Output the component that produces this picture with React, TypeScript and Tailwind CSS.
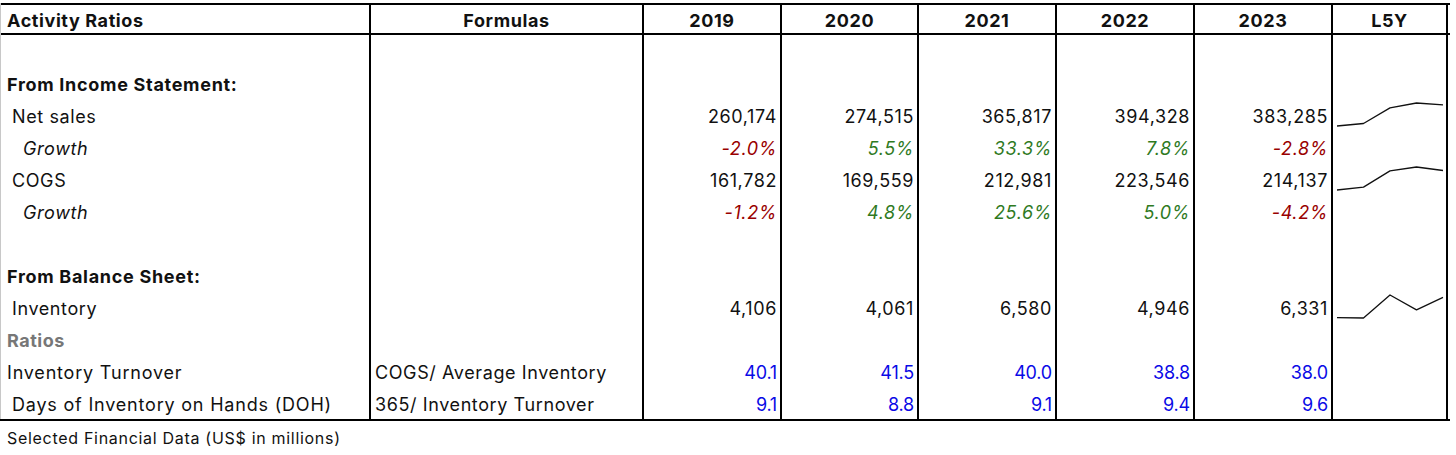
import React from 'react';

const W = ['w-[370px]', 'w-[273px]', 'w-[138px]', 'w-[137px]', 'w-[138px]', 'w-[138px]', 'w-[138px]', 'w-[115px]'];
const YEARS = ['2019', '2020', '2021', '2022', '2023'];

type Row = {
  label?: string;
  kind?: 'section' | 'item' | 'growth' | 'ratio' | 'gray' | 'sub';
  formula?: string;
  values?: string[];
  spark?: number[];
  blue?: boolean;
};

const rows: Row[] = [
  {},
  { label: 'From Income Statement:', kind: 'section' },
  { label: 'Net sales', kind: 'item', values: ['260,174', '274,515', '365,817', '394,328', '383,285'], spark: [260174, 274515, 365817, 394328, 383285] },
  { label: 'Growth', kind: 'growth', values: ['-2.0%', '5.5%', '33.3%', '7.8%', '-2.8%'] },
  { label: 'COGS', kind: 'item', values: ['161,782', '169,559', '212,981', '223,546', '214,137'], spark: [161782, 169559, 212981, 223546, 214137] },
  { label: 'Growth', kind: 'growth', values: ['-1.2%', '4.8%', '25.6%', '5.0%', '-4.2%'] },
  {},
  { label: 'From Balance Sheet:', kind: 'section' },
  { label: 'Inventory', kind: 'item', values: ['4,106', '4,061', '6,580', '4,946', '6,331'], spark: [4106, 4061, 6580, 4946, 6331] },
  { label: 'Ratios', kind: 'gray' },
  { label: 'Inventory Turnover', kind: 'ratio', formula: 'COGS/ Average Inventory', values: ['40.1', '41.5', '40.0', '38.8', '38.0'], blue: true },
  { label: 'Days of Inventory on Hands (DOH)', kind: 'sub', formula: '365/ Inventory Turnover', values: ['9.1', '8.8', '9.1', '9.4', '9.6'], blue: true },
];

function Spark({ data }: { data: number[] }) {
  const min = Math.min(...data);
  const max = Math.max(...data);
  const pts = data
    .map((v, i) => `${4 + i * 26.5},${(4 + ((max - v) / (max - min)) * 23).toFixed(1)}`)
    .join(' ');
  return (
    <svg width="113" height="32" viewBox="0 0 113 32" className="block">
      <polyline points={pts} fill="none" stroke="#111" strokeWidth="1.3" strokeLinejoin="round" />
    </svg>
  );
}

function labelClass(kind?: Row['kind']) {
  switch (kind) {
    case 'section':
      return 'pl-[6px] font-bold tracking-[0.7px]';
    case 'item':
      return 'pl-[11px]';
    case 'growth':
      return 'pl-[22px] italic';
    case 'gray':
      return 'pl-[6px] font-bold text-[#777] tracking-[0.5px]';
    case 'ratio':
      return 'pl-[6px] tracking-[0.8px]';
    case 'sub':
      return 'pl-[11px] tracking-[0.8px]';
    default:
      return '';
  }
}

function valueColor(row: Row, v: string) {
  if (row.blue) return 'text-[#0a0ae6] tracking-[-0.2px]';
  if (row.kind === 'growth') return v.startsWith('-') ? 'text-[#990000] italic' : 'text-[#2f7a1f] italic';
  return 'text-[#111]';
}

export default function App() {
  return (
    <div className="w-[1456px] h-[455px] bg-white pt-[3px] font-[Inter,sans-serif] text-[18px] tracking-[0.6px] text-[#111] overflow-hidden">
      <div className="border-l border-[#c8c8c8] w-[1450px]">
        {/* header */}
        <div className="flex h-[32px] border-t-2 border-b-2 border-black font-bold tracking-[0.6px]">
          <div className={`${W[0]} shrink-0 border-r-2 border-black flex items-center pl-[6px] pt-[3px]`}>Activity Ratios</div>
          <div className={`${W[1]} shrink-0 border-r-2 border-black flex items-center justify-center pt-[3px]`}>Formulas</div>
          {YEARS.map((y, i) => (
            <div key={y} className={`${W[i + 2]} shrink-0 border-r-2 border-black flex items-center justify-center pt-[3px]`}>
              {y}
            </div>
          ))}
          <div className={`${W[7]} shrink-0 border-r-2 border-black flex items-center justify-center pt-[3px]`}>L5Y</div>
        </div>

        {rows.map((row, r) => (
          <div key={r} className="flex h-[32px]">
            <div className={`${W[0]} shrink-0 border-r-2 border-black flex items-center pt-[2px] whitespace-nowrap ${labelClass(row.kind)}`}>
              {row.label}
            </div>
            <div className={`${W[1]} shrink-0 border-r-2 border-black flex items-center pt-[2px] pl-[4px] whitespace-nowrap`}>
              {row.formula}
            </div>
            {YEARS.map((y, i) => {
              const v = row.values?.[i];
              return (
                <div
                  key={y}
                  className={`${W[i + 2]} shrink-0 border-r-2 border-black flex items-center justify-end pt-[2px] pr-[3px] ${v ? valueColor(row, v) : ''}`}
                >
                  {v}
                </div>
              );
            })}
            <div className={`${W[7]} shrink-0 border-r-2 border-black flex items-center`}>
              {row.spark && <Spark data={row.spark} />}
            </div>
          </div>
        ))}
      </div>
      <div className="border-t-2 border-black w-[1450px] h-[34px] flex items-center pl-[7px] pt-[2px] text-[16px] tracking-[0.7px]">
        Selected Financial Data (US$ in millions)
      </div>
    </div>
  );
}
